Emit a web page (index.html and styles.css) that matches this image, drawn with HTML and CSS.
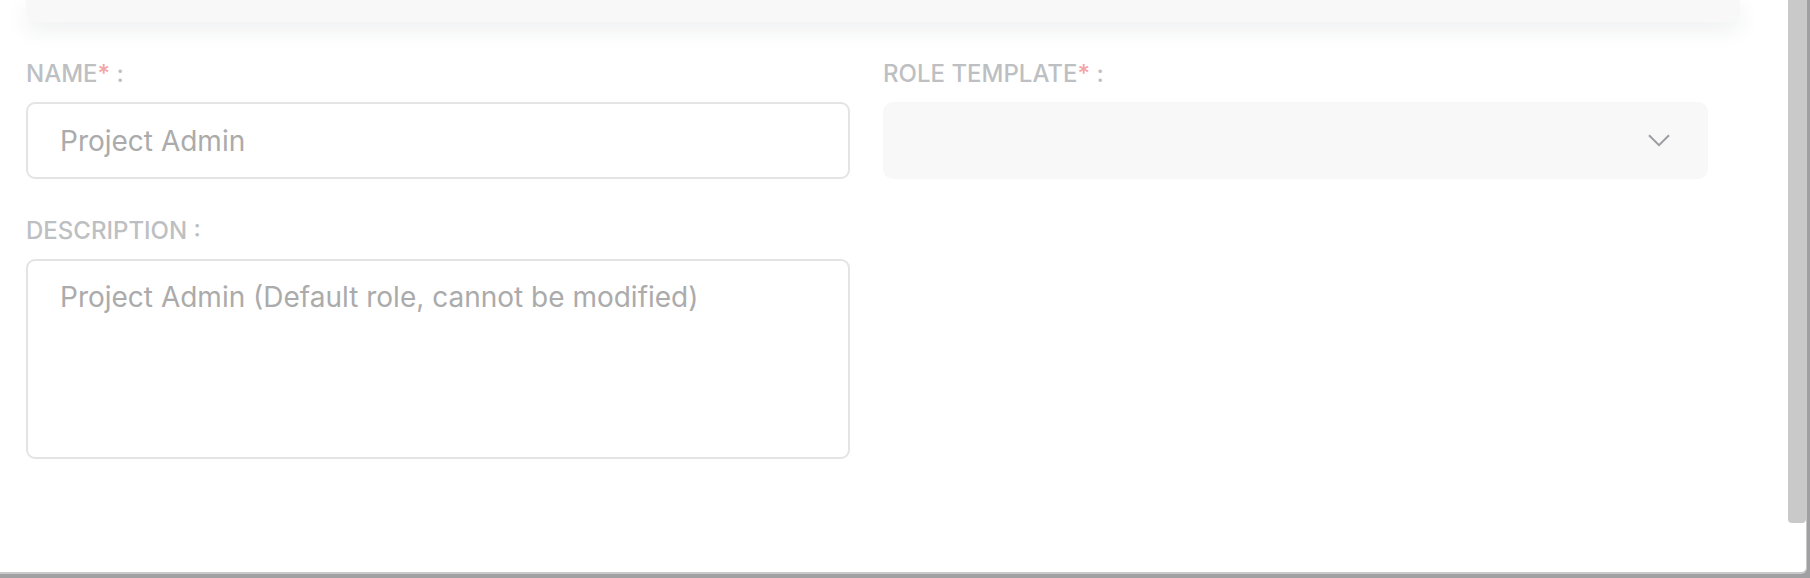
FILE: index.html
```html
<!DOCTYPE html>
<html lang="en">
<head>
<meta charset="utf-8">
<title>Role</title>
<link rel="stylesheet" href="styles.css">
</head>
<body>
<div class="window">
  <div class="content">
    <div class="top-card"></div>
    <form class="form">
      <div class="field">
        <label class="label">NAME<span class="req">*</span> :</label>
        <div class="input">Project Admin</div>
      </div>
      <div class="field">
        <label class="label">ROLE TEMPLATE<span class="req">*</span> :</label>
        <div class="select">
          <svg class="chev" width="22" height="13" viewBox="0 0 22 13" aria-hidden="true">
            <path d="M1 1.2 L11 11.2 L21 1.2" fill="none" stroke="#9c9ca3" stroke-width="2"/>
          </svg>
        </div>
      </div>
      <div class="field">
        <label class="label">DESCRIPTION :</label>
        <div class="textarea">Project Admin (Default role, cannot be modified)</div>
      </div>
    </form>
  </div>
  <div class="scrollbar"><div class="thumb"></div></div>
</div>
</body>
</html>
```

FILE: styles.css
```css
html, body {
  margin: 0;
  padding: 0;
}
body {
  width: 1810px;
  height: 578px;
  overflow: hidden;
  background: #a0a0a3;
  font-family: Inter, "Liberation Sans", sans-serif;
}
.window {
  width: 1806px;
  height: 572px;
  background: #ffffff;
  border-right: 1px solid #c9c9c9;
  border-bottom: 2px solid #c9c9c9;
  border-bottom-right-radius: 6px;
  display: flex;
  overflow: hidden;
}
.content {
  flex: 1;
  min-width: 0;
}
.top-card {
  margin-left: 26px;
  width: 1714px;
  height: 22px;
  background: #f8f8f9;
  border-radius: 0 0 10px 10px;
  box-shadow: 0 8px 22px rgba(40, 50, 70, 0.08);
}
.form {
  margin: 36px 0 0 26px;
  display: grid;
  grid-template-columns: 824px 825px;
  column-gap: 33px;
  row-gap: 36px;
  align-items: start;
}
.field {
  display: flex;
  flex-direction: column;
  gap: 12px;
}
.label {
  font-size: 24px;
  line-height: 32px;
  font-weight: 500;
  color: #bdbfc2;
  letter-spacing: 0;
}
.req {
  color: #f4a5a5;
}
.input {
  box-sizing: border-box;
  height: 77px;
  border: 2px solid #e4e4e4;
  border-radius: 9px;
  padding: 0 32px;
  display: flex;
  align-items: center;
  font-size: 28px;
  color: #ababab;
}
.select {
  box-sizing: border-box;
  height: 77px;
  background: #f8f8f8;
  border-radius: 10px;
  display: flex;
  align-items: center;
  justify-content: flex-end;
  padding-right: 38px;
}
.chev {
  display: block;
}
.textarea {
  box-sizing: border-box;
  height: 200px;
  border: 2px solid #e4e4e4;
  border-radius: 9px;
  padding: 15px 32px;
  font-size: 28px;
  line-height: 42px;
  color: #ababab;
}
.scrollbar {
  width: 18px;
  flex: none;
}
.thumb {
  height: 523px;
  background: #c9c9c9;
  border-radius: 0 0 4px 4px;
}
```
